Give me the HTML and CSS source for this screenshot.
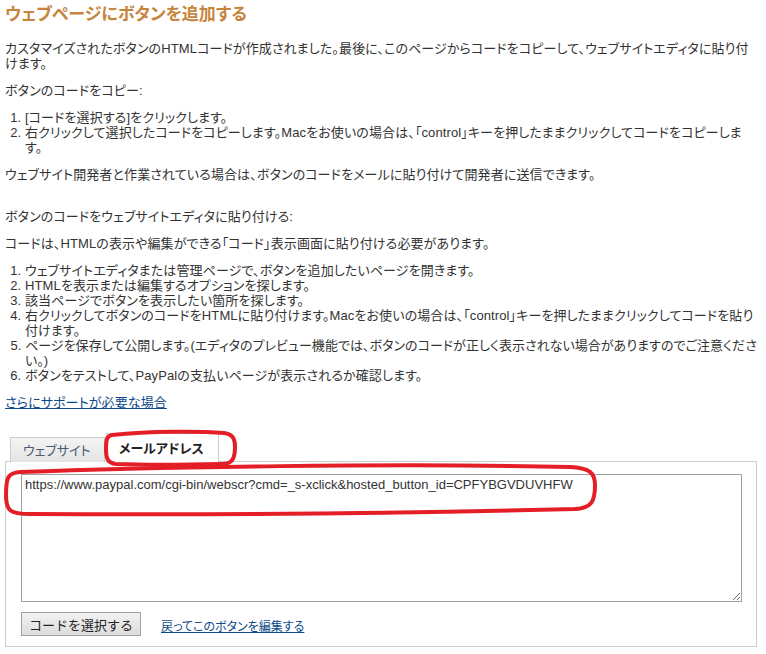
FILE: index.html
```html
<!DOCTYPE html>
<html lang="ja">
<head>
<meta charset="utf-8">
<title>ウェブページにボタンを追加する</title>
<link rel="stylesheet" href="styles.css">
</head>
<body>
<div class="page">
  <h1 class="title">ウェブページにボタンを追加する</h1>
  <p class="text first">カスタマイズされたボタンのHTMLコードが作成されました。最後に、このページからコードをコピーして、ウェブサイトエディタに貼り付けます。</p>
  <p class="text">ボタンのコードをコピー:</p>
  <ol class="steps">
    <li>[コードを選択する]をクリックします。</li>
    <li>右クリックして選択したコードをコピーします。Macをお使いの場合は、「control」キーを押したままクリックしてコードをコピーします。</li>
  </ol>
  <p class="text">ウェブサイト開発者と作業されている場合は、ボタンのコードをメールに貼り付けて開発者に送信できます。</p>
  <p class="text section">ボタンのコードをウェブサイトエディタに貼り付ける:</p>
  <p class="text">コードは、HTMLの表示や編集ができる「コード」表示画面に貼り付ける必要があります。</p>
  <ol class="steps">
    <li>ウェブサイトエディタまたは管理ページで、ボタンを追加したいページを開きます。</li>
    <li>HTMLを表示または編集するオプションを探します。</li>
    <li>該当ページでボタンを表示したい箇所を探します。</li>
    <li>右クリックしてボタンのコードをHTMLに貼り付けます。Macをお使いの場合は、「control」キーを押したままクリックしてコードを貼り付けます。</li>
    <li class="tight">ページを保存して公開します。(エディタのプレビュー機能では、ボタンのコードが正しく表示されない場合がありますのでご注意ください。)</li>
    <li>ボタンをテストして、PayPalの支払いページが表示されるか確認します。</li>
  </ol>
  <p class="text"><a class="link" href="#">さらにサポートが必要な場合</a></p>

  <div class="tabs-wrap">
    <div class="tabs">
      <div class="tab">ウェブサイト</div>
      <div class="tab active">メールアドレス</div>
    </div>
    <div class="panel">
      <textarea class="code" spellcheck="false">https://www.paypal.com/cgi-bin/webscr?cmd=_s-xclick&amp;hosted_button_id=CPFYBGVDUVHFW</textarea>
      <div class="actions">
        <button class="select-btn" type="button">コードを選択する</button>
        <a class="edit-link" href="#">戻ってこのボタンを編集する</a>
      </div>
    </div>
    <svg class="marks" width="766" height="100" viewBox="0 0 766 100" aria-hidden="true">
      <path d="M112 8 C150 4 200 4 224 6 C233 7 235 12 235 20 C235 32 232 37 222 37 C180 38 140 38 116 37 C108 36 106 32 106 22 C106 12 107 9 112 8 Z" fill="none" stroke="#e41e26" stroke-width="4"/>
      <path d="M20 45 C150 40 400 36 570 40 C590 41 595 46 595 58 C595 74 592 81 575 82 C420 86 200 88 30 87 C10 87 6 84 6 68 C6 50 8 46 20 45 Z" fill="none" stroke="#e41e26" stroke-width="4"/>
    </svg>
  </div>
</div>
</body>
</html>
```

FILE: styles.css
```css
html, body {
  margin: 0;
  padding: 0;
  background: #fff;
}

body {
  font-family: "Liberation Sans", "Noto Sans CJK JP", sans-serif;
  font-size: 13px;
  color: #333;
  font-feature-settings: "palt";
  letter-spacing: 0.11px;
}

.page {
  width: 752px;
  padding: 5px 0 0 5px;
}

.title {
  margin: 0;
  font-size: 17px;
  line-height: 20px;
  font-weight: bold;
  color: #c7843d;
  letter-spacing: 0;
}

.text {
  margin: 12px 0 0;
  line-height: 15px;
}

.text.first {
  margin-top: 16px;
}

.text.section {
  margin-top: 27px;
}

.steps {
  margin: 12px 0 0;
  padding-left: 20px;
  line-height: 15px;
}

.steps .tight {
  letter-spacing: 0.03px;
}

.link {
  color: #0b4a8a;
  text-decoration: underline;
}

.tabs-wrap {
  position: relative;
  margin-top: 23px;
  letter-spacing: 0;
}

.tabs {
  display: flex;
  align-items: flex-end;
  padding-left: 5px;
  gap: 1px;
  margin-bottom: -1px;
}

.tab {
  height: 24px;
  line-height: 25px;
  padding: 0 12px;
  border: 1px solid #ccc;
  border-bottom: none;
  background: linear-gradient(#f4f4f4, #e4e4e4);
  color: #4a5a70;
  font-size: 13px;
  width: 69px;
}

.tab.active {
  height: 28px;
  line-height: 29px;
  width: 87px;
  background: #fff;
  color: #222;
  font-weight: bold;
  position: relative;
}

.panel {
  border: 1px solid #ccc;
  padding: 12px 14px 10px 15px;
  display: flex;
  flex-direction: column;
  gap: 10px;
}

.code {
  display: block;
  box-sizing: border-box;
  width: 721px;
  height: 128px;
  border: 1px solid #a0a0a0;
  padding: 2px 3px;
  margin: 0;
  font-family: "Liberation Sans", sans-serif;
  font-size: 13px;
  line-height: 16px;
  color: #333;
  resize: both;
  background: #fff;
}

.actions {
  display: flex;
  align-items: center;
  gap: 20px;
}

.select-btn {
  box-sizing: border-box;
  width: 120px;
  height: 24px;
  padding: 0;
  border: 1px solid #a0a0a0;
  background: linear-gradient(#f2f2f2, #dcdcdc);
  font-family: "Liberation Sans", "Noto Sans CJK JP", sans-serif;
  font-size: 13px;
  color: #222;
}

.edit-link {
  color: #0b4a8a;
  font-size: 12px;
  text-decoration: underline;
  margin-top: 2px;
}

.marks {
  position: absolute;
  left: -5px;
  top: -6px;
  pointer-events: none;
}
```
